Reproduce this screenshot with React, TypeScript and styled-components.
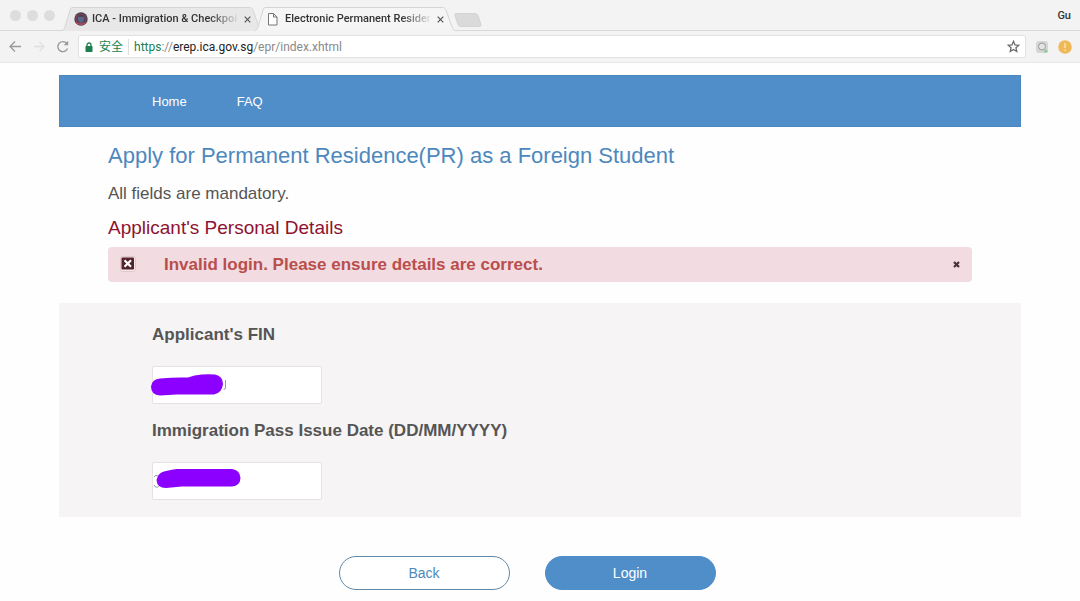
import React from 'react';
import styled, { createGlobalStyle, css } from 'styled-components';

const GlobalStyle = createGlobalStyle`
  *, *::before, *::after { box-sizing: border-box; }
  body {
    margin: 0;
    background: #fefefe;
    color: #555;
    font-family: 'Liberation Sans', Arial, 'Noto Sans CJK SC', sans-serif;
  }
  button { font: inherit; border: 0; padding: 0; background: none; color: inherit; cursor: pointer; }
`;

const uiFont = css`
  font-family: Roboto, 'Noto Sans CJK SC', sans-serif;
`;

/* ---------- Browser window ---------- */

const Chrome = styled.header`
  ${uiFont}
  background: #f4f3f4;
`;

const TabStrip = styled.div`
  display: flex;
  align-items: flex-end;
  height: 31px;
  padding-left: 10px;
  border-bottom: 1px solid #d9d8d9;
`;

const WindowControls = styled.div`
  display: flex;
  align-self: center;
  gap: 6px;
  width: 52px;
`;

const WindowDot = styled.button.attrs({ type: 'button' })`
  width: 11px;
  height: 11px;
  border-radius: 50%;
  background: #dedddd;
`;

const Tab = styled.div`
  position: relative;
  display: flex;
  align-items: center;
  flex: none;
  width: 200px;
  height: 24px;
  margin-right: -7px;
  margin-bottom: -1px;
  padding: 0 8px 0 12px;
  gap: 4px;
  font-size: 11px;
  font-weight: 500;
  line-height: 24px;
  color: #333;
`;

const TabShape = styled.svg`
  position: absolute;
  inset: 0;
  width: 100%;
  height: 100%;
`;

const TabIcon = styled.svg`
  position: relative;
  flex: none;
  width: 14px;
  height: 14px;
`;

const TabTitle = styled.button.attrs({ type: 'button' })`
  position: relative;
  flex: 1;
  min-width: 0;
  white-space: nowrap;
  text-align: left;
  mask-image: linear-gradient(to right, #000 80%, transparent 102%);
`;

const TabClose = styled.button.attrs({ type: 'button' })`
  position: relative;
  display: flex;
  flex: none;
  padding: 3px;
`;

const NewTab = styled.button.attrs({ type: 'button' })`
  display: flex;
  margin: 0 0 3px 6px;
`;

const Profile = styled.button.attrs({ type: 'button' })`
  align-self: center;
  margin: 1px 9px 0 auto;
  font-size: 11px;
  font-weight: 500;
  color: #333;
`;

const Toolbar = styled.div`
  display: flex;
  align-items: center;
  height: 32px;
  padding: 0 8px;
  border-bottom: 1px solid #e9e7e8;
`;

const NavButtons = styled.div`
  display: flex;
  gap: 9px;
  width: 70px;
`;

const IconButton = styled.button.attrs({ type: 'button' })`
  display: flex;
  flex: none;
`;

const AddressBar = styled.div`
  display: flex;
  flex: 1;
  align-items: center;
  height: 23px;
  padding: 0 5px 0 6px;
  border: 1px solid #e2e1e2;
  border-radius: 3px;
  background: #fff;
  font-size: 12px;
  line-height: 20px;
`;

const Secure = styled.span`
  display: flex;
  align-items: center;
  gap: 6px;
  margin-right: 5px;
  padding-right: 5px;
  border-right: 1px solid #dedede;
  color: #1b7f50;
  font-size: 12px;
  line-height: 16px;
`;

const Address = styled.div`
  flex: 1;
  color: #8a8a8a;
  outline: 0;
`;

const Scheme = styled.span`
  color: #1b7f50;
`;

const Host = styled.span`
  color: #222;
`;

const Extensions = styled.div`
  display: flex;
  gap: 9px;
  margin-left: 9px;
`;

/* ---------- Page ---------- */

const Page = styled.main`
  margin: 0 59px;
  padding-top: 12px;
`;

const SiteNav = styled.nav`
  display: flex;
  align-items: center;
  gap: 50px;
  height: 52px;
  padding-left: 92px;
  border: 1px solid #4a86c0;
  background: #508eca;
`;

const NavLink = styled.a`
  color: #fff;
  font-size: 13px;
  text-decoration: none;
`;

const Intro = styled.section`
  padding: 15px 49px 21px;
`;

const Title = styled.h1`
  margin: 0;
  color: #4d88bd;
  font-size: 22px;
  font-weight: 400;
  line-height: 28px;
`;

const Note = styled.p`
  margin: 13px 0 11px;
  font-size: 17px;
  line-height: 22px;
`;

const SectionTitle = styled.h2`
  margin: 0;
  color: #8e1230;
  font-size: 19px;
  font-weight: 400;
  line-height: 24px;
`;

const Alert = styled.div`
  display: flex;
  align-items: center;
  height: 35px;
  margin-top: 7px;
  padding: 0 12px;
  border-radius: 4px;
  background: #f2dce1;
`;

const AlertIcon = styled.svg`
  flex: none;
  margin-bottom: 2px;
`;

const AlertText = styled.p`
  flex: 1;
  margin: 0 0 0 28px;
  color: #b94f4c;
  font-size: 17px;
  font-weight: 700;
  line-height: 24px;
`;

const Details = styled.form`
  display: block;
`;

const Fields = styled.div`
  padding: 21px 93px 17px;
  background: #f6f4f5;
`;

const Label = styled.label`
  display: block;
  margin-bottom: 20px;
  font-size: 17px;
  font-weight: 700;
  line-height: 22px;
`;

const FieldBox = styled.div`
  position: relative;
  width: 170px;
  margin-bottom: 16px;
  &:last-child { margin-bottom: 0; }
`;

const TextInput = styled.input`
  display: block;
  width: 100%;
  height: 38px;
  padding: 0 8px;
  border: 1px solid #e4e2e3;
  border-radius: 2px;
  background: #fff;
  color: #555;
  font: 14px 'Liberation Sans', Arial, sans-serif;
`;

const Scribble = styled.svg`
  position: absolute;
  top: 6px;
  left: -2px;
  pointer-events: none;
`;

const Actions = styled.div`
  display: flex;
  justify-content: center;
  gap: 35px;
  padding: 39px 26px 11px 0;
`;

const Pill = styled.button<{ $primary?: boolean }>`
  width: 171px;
  height: 34px;
  border: 1px solid ${(p) => (p.$primary ? '#508eca' : '#6289a8')};
  border-radius: 17px;
  background: ${(p) => (p.$primary ? '#508eca' : '#fff')};
  color: ${(p) => (p.$primary ? '#fff' : '#4d88bd')};
  font-size: 14px;
`;

const CloseGlyph = () => (
  <svg width="7" height="7" viewBox="0 0 7 7" aria-hidden="true">
    <path d="M.7.7l5.6 5.6M6.3.7L.7 6.3" stroke="#555" strokeWidth="1.2" />
  </svg>
);

type BrowserTabProps = { title: string; active?: boolean; children: React.ReactNode };

const BrowserTab = ({ title, active, children }: BrowserTabProps) => (
  <Tab>
    <TabShape viewBox="0 0 200 24" preserveAspectRatio="none" aria-hidden="true">
      <path
        d="M0 24C2 23 2 22 3 20L8 3C9 1 9 .5 11 .5H187C189 .5 190 1 191 3L197 20C198 22 198 23 200 24Z"
        fill={active ? '#f6f5f6' : '#e9e8e9'}
      />
      <path
        d="M0 23.5C2 23 2 22 3 20L8 3C9 1 9 .5 11 .5H187C189 .5 190 1 191 3L197 20C198 22 198 23 200 23.5"
        fill="none"
        stroke="#d6d5d6"
      />
    </TabShape>
    {children}
    <TabTitle>{title}</TabTitle>
    <TabClose aria-label="Close tab"><CloseGlyph /></TabClose>
  </Tab>
);

export default function App() {
  return (
    <>
      <GlobalStyle />
      <Chrome>
        <TabStrip>
          <WindowControls>
            <WindowDot aria-label="Close window" />
            <WindowDot aria-label="Minimise window" />
            <WindowDot aria-label="Zoom window" />
          </WindowControls>
          <BrowserTab title="ICA - Immigration & Checkpoin">
            <TabIcon viewBox="0 0 13 13" aria-hidden="true">
              <circle cx="6.5" cy="6.5" r="6.2" fill="#4a3d51" />
              <circle cx="6.5" cy="6.5" r="4.7" fill="none" stroke="#8d4654" strokeWidth="1" />
              <path d="M3.5 4.5h6v2.5q0 2-3 3.5-3-1.500-3-3.500z" fill="#5a6685" />
              <path d="M2 9q4.500 3.500 9 0v1.500q-4.500 3-9 0z" fill="#b64b58" />
            </TabIcon>
          </BrowserTab>
          <BrowserTab title="Electronic Permanent Residen" active>
            <TabIcon viewBox="0 0 14 14" aria-hidden="true">
              <path d="M1.500 1.500h5l3.500 3.500v8h-8.500zM6.500 1.500v3.500h3.500" fill="#fff" stroke="#777" />
            </TabIcon>
          </BrowserTab>
          <NewTab aria-label="New tab">
            <svg width="28" height="14" viewBox="0 0 28 14" aria-hidden="true">
              <path d="M2 .5H21Q23 .5 24 2.500L27 11.500Q27.500 13.500 25 13.500H7Q5 13.500 4 11.500L1 2.500Q.5 .5 2 .5Z" fill="#dbdadb" stroke="#d4d3d4" />
            </svg>
          </NewTab>
          <Profile>Gu</Profile>
        </TabStrip>
        <Toolbar>
          <NavButtons>
            <IconButton aria-label="Back">
              <svg width="15" height="14" viewBox="0 0 15 14" fill="none" stroke="#999" strokeWidth="1.3">
                <path d="M13 6.500H2.500M7 1.500l-5 5 5 5" />
              </svg>
            </IconButton>
            <IconButton aria-label="Forward">
              <svg width="15" height="14" viewBox="0 0 15 14" fill="none" stroke="#e0e0e0" strokeWidth="1.3">
                <path d="M2 6.500h10M7.500 2l4.500 4.500-4.500 4.500" />
              </svg>
            </IconButton>
            <IconButton aria-label="Reload">
              <svg width="15" height="14" viewBox="0 0 15 14" fill="none" stroke="#999" strokeWidth="1.300">
                <path d="M11.500 8.500A5 5 0 1 1 10.800 3.500" />
                <path d="M12.200 .8v4.500H7.700z" fill="#999" stroke="none" />
              </svg>
            </IconButton>
          </NavButtons>
          <AddressBar>
            <Secure>
              <svg width="8" height="10" viewBox="0 0 8 10" aria-hidden="true">
                <path d="M2 5V3a2 2 0 0 1 4 0v2" fill="none" stroke="#1b7f50" strokeWidth="1.3" />
                <rect x=".5" y="4" width="7" height="6" rx=".7" fill="#1b7f50" />
              </svg>
              安全
            </Secure>
            <Address role="textbox" aria-label="Address" contentEditable suppressContentEditableWarning spellCheck={false}>
              <Scheme>https</Scheme>://<Host>erep.ica.gov.sg</Host>/epr/index.xhtml
            </Address>
            <IconButton aria-label="Bookmark this page">
              <svg width="13" height="13" viewBox="0 0 13 13" fill="none" stroke="#666" strokeWidth="1.200">
                <path d="M6.500 1.300l1.500 3.600 3.900.3-3 2.500.9 3.800-3.300-2-3.300 2 .9-3.800-3-2.500 3.900-.3z" />
              </svg>
            </IconButton>
          </AddressBar>
          <Extensions>
            <IconButton aria-label="Search extension">
              <svg width="14" height="14" viewBox="0 0 14 14">
                <rect x="1" y="1" width="12" height="12" rx="3" fill="#d5d7d5" />
                <circle cx="7" cy="6.500" r="3.500" fill="#e3e3e3" stroke="#9a9a9a" />
                <path d="M9.500 9l3 1.500v2H9z" fill="#8fc99b" />
              </svg>
            </IconButton>
            <IconButton aria-label="Update available">
              <svg width="14" height="14" viewBox="0 0 14 14">
                <circle cx="7" cy="7" r="6.800" fill="#efb95a" />
                <path d="M7 3v5M7 9.500v1.500" stroke="#fbe3b0" strokeWidth="1.500" />
              </svg>
            </IconButton>
          </Extensions>
        </Toolbar>
      </Chrome>

      <Page>
        <SiteNav>
          <NavLink href="#home">Home</NavLink>
          <NavLink href="#faq">FAQ</NavLink>
        </SiteNav>
        <Intro>
          <Title>Apply for Permanent Residence(PR) as a Foreign Student</Title>
          <Note>All fields are mandatory.</Note>
          <SectionTitle>Applicant's Personal Details</SectionTitle>
          <Alert role="alert">
            <AlertIcon width="16" height="16" viewBox="0 0 16 16" aria-hidden="true">
              <rect x=".5" y=".5" width="15" height="15" rx="2" fill="#f5e8e8" stroke="#dfc8cc" />
              <rect x="1.500" y="1.500" width="12.500" height="12" rx="1" fill="#54222e" />
              <path d="M4.500 4.300l6.500 6.500M11 4.300l-6.500 6.500" stroke="#fff" strokeWidth="2.200" />
            </AlertIcon>
            <AlertText>Invalid login. Please ensure details are correct.</AlertText>
            <IconButton aria-label="Dismiss">
              <svg width="7" height="7" viewBox="0 0 7 7">
                <path d="M1 1l5 5M6 1L1 6" stroke="#4a3038" strokeWidth="2.200" />
              </svg>
            </IconButton>
          </Alert>
        </Intro>
        <Details onSubmit={(e) => e.preventDefault()}>
          <Fields>
            <Label htmlFor="fin">Applicant's FIN</Label>
            <FieldBox>
              <TextInput id="fin" type="text" />
              <Scribble width="80" height="28" viewBox="0 0 80 28" aria-hidden="true">
                <path d="M75.500 8v8q0 1.500-2 1.500" fill="none" stroke="#999" />
                <path d="M10 6.500Q25 5 38 5.500Q44 3 52 2.500Q60 2 65 2.500Q73 4 73 12Q72 21 64 22.500H27Q18 23 10 23.500Q1 23 1 14.500Q2 7 10 6.500Z" fill="#8b00ff" />
              </Scribble>
            </FieldBox>
            <Label htmlFor="issue-date">Immigration Pass Issue Date (DD/MM/YYYY)</Label>
            <FieldBox>
              <TextInput id="issue-date" type="text" />
              <Scribble width="94" height="28" viewBox="0 0 94 28" aria-hidden="true">
                <path d="M4 9q2-3 4-1M4 17q2 4 5 1" fill="none" stroke="#999" />
                <path d="M16 3Q22 1.500 27 1H82Q90 2 90.500 10Q90 18 82 18.500H32Q24 19 16 20Q7 20 6.500 12Q8 4 16 3Z" fill="#8b00ff" />
              </Scribble>
            </FieldBox>
          </Fields>
          <Actions>
            <Pill type="button">Back</Pill>
            <Pill type="submit" $primary>Login</Pill>
          </Actions>
        </Details>
      </Page>
    </>
  );
}
